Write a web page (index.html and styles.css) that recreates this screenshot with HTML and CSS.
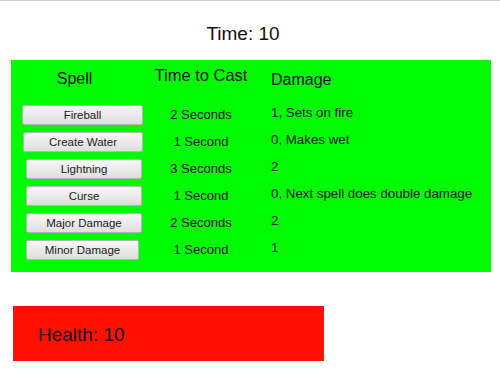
FILE: index.html
```html
<!DOCTYPE html>
<html lang="en">
<head>
    <meta charset="UTF-8">
    <meta name="viewport" content="width=device-width, initial-scale=1.0">
    <title>Spells</title>
    <link rel="stylesheet" href="styles.css">
</head>
<body>
    <div class="timer">Time: 10</div>

    <div class="spellbook">
        <div class="row head">
            <div class="col-spell">Spell</div>
            <div class="col-time up">Time to Cast</div>
            <div class="col-damage down">Damage</div>
        </div>
        <div class="row">
            <div class="col-spell"><button class="spell w1">Fireball</button></div>
            <div class="col-time">2 Seconds</div>
            <div class="col-damage">1, Sets on fire</div>
        </div>
        <div class="row">
            <div class="col-spell"><button class="spell w2">Create Water</button></div>
            <div class="col-time">1 Second</div>
            <div class="col-damage">0, Makes wet</div>
        </div>
        <div class="row">
            <div class="col-spell"><button class="spell w3">Lightning</button></div>
            <div class="col-time">3 Seconds</div>
            <div class="col-damage">2</div>
        </div>
        <div class="row">
            <div class="col-spell"><button class="spell w3">Curse</button></div>
            <div class="col-time">1 Second</div>
            <div class="col-damage">0, Next spell does double damage</div>
        </div>
        <div class="row">
            <div class="col-spell"><button class="spell w3">Major Damage</button></div>
            <div class="col-time">2 Seconds</div>
            <div class="col-damage">2</div>
        </div>
        <div class="row">
            <div class="col-spell"><button class="spell w4">Minor Damage</button></div>
            <div class="col-time">1 Second</div>
            <div class="col-damage">1</div>
        </div>
    </div>

    <div class="health">Health: 10</div>
</body>
</html>
```

FILE: styles.css
```css
html {
    font-family: "Liberation Sans", Arial, sans-serif;
}
* {
    box-sizing: border-box;
}
body {
    margin: 0;
    border-top: 1px solid #cfcfcf;
    color: #111;
}
.timer {
    height: 59px;
    line-height: 66px;
    font-size: 19px;
    padding-right: 14px;
    text-align: center;
}
.spellbook {
    width: 480px;
    margin-left: 11px;
    padding: 3px 0 9px;
    background-color: #00fa00;
}
.row {
    display: flex;
    align-items: center;
    height: 27px;
    font-size: 13px;
}
.row.head {
    height: 38px;
    padding-bottom: 7px;
    font-size: 16px;
}
.col-spell {
    width: 139px;
    padding-left: 11px;
    text-align: center;
}
.head .col-spell {
    padding-left: 0;
    padding-right: 12px;
}
.col-time {
    width: 102px;
    text-align: center;
}
.head .col-time {
    font-size: 16.5px;
    margin-top: -7px;
}
.col-damage {
    padding-left: 19px;
    margin-top: -5px;
    font-size: 13.3px;
}
.head .col-damage {
    margin-top: 2px;
    font-size: 16px;
}
.spell {
    display: block;
    height: 20px;
    padding: 0;
    font-family: inherit;
    font-size: 11.5px;
    color: #1a1a1a;
    border: 1px solid #b5b5b5;
    border-radius: 2px;
    background: linear-gradient(#f7f7f7, #dedede);
}
.w1 { width: 121px; margin-left: 0; }
.w2 { width: 120px; margin-left: 1px; }
.w3 { width: 116px; margin-left: 4px; }
.w4 { width: 113px; margin-left: 4px; }
.health {
    width: 311px;
    height: 55px;
    margin: 34px 0 0 13px;
    padding-left: 25px;
    line-height: 57px;
    font-size: 19px;
    background-color: #ff1000;
}
```
